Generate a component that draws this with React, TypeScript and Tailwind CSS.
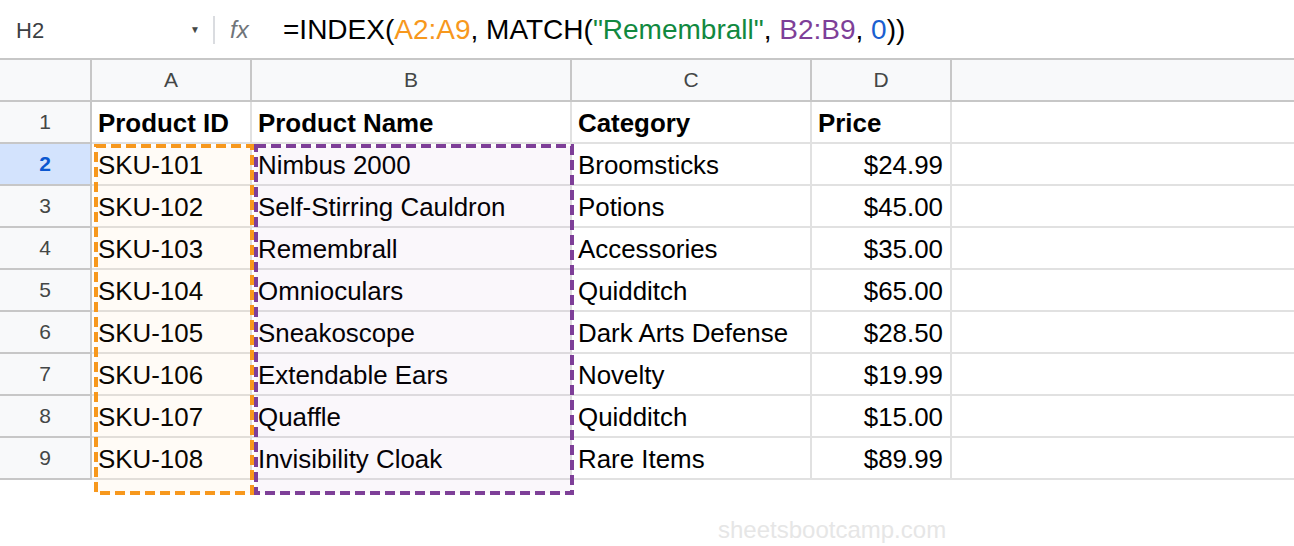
import React from "react";

const rows = [
  ["SKU-101", "Nimbus 2000", "Broomsticks", "$24.99"],
  ["SKU-102", "Self-Stirring Cauldron", "Potions", "$45.00"],
  ["SKU-103", "Remembrall", "Accessories", "$35.00"],
  ["SKU-104", "Omnioculars", "Quidditch", "$65.00"],
  ["SKU-105", "Sneakoscope", "Dark Arts Defense", "$28.50"],
  ["SKU-106", "Extendable Ears", "Novelty", "$19.99"],
  ["SKU-107", "Quaffle", "Quidditch", "$15.00"],
  ["SKU-108", "Invisibility Cloak", "Rare Items", "$89.99"],
];

const font = { fontFamily: '"Liberation Sans", Arial, sans-serif' };

function Row({ n, cells, bold, active }: { n: number; cells: string[]; bold?: boolean; active?: boolean }) {
  return (
    <div className="flex h-[42px]">
      <div
        className={`w-[92px] shrink-0 flex items-center justify-center border-r-2 border-r-[#c7c7c7] border-b-2 border-b-[#c7c7c7] text-[21px] ${
          active ? "bg-[#d3e3fd] text-[#0b57d0] font-bold" : "bg-[#f8f9fa] text-[#444746]"
        }`}
      >
        {n}
      </div>
      <div className={`w-[160px] shrink-0 flex items-center pl-[6px] pt-[2px] border-r-2 border-b-2 border-[#e1e1e1] text-[25.9px] text-black ${bold ? "font-bold" : ""}`}>
        {cells[0]}
      </div>
      <div className={`w-[320px] shrink-0 flex items-center pl-[6px] pt-[2px] border-r-2 border-b-2 border-[#e1e1e1] text-[25.9px] text-black ${bold ? "font-bold" : ""}`}>
        {cells[1]}
      </div>
      <div className={`w-[240px] shrink-0 flex items-center pl-[6px] pt-[2px] border-r-2 border-b-2 border-[#e1e1e1] text-[25.9px] text-black ${bold ? "font-bold" : ""}`}>
        {cells[2]}
      </div>
      <div
        className={`w-[140px] shrink-0 flex items-center pt-[2px] border-r-2 border-b-2 border-[#e1e1e1] text-[25.9px] text-black ${
          bold ? "font-bold justify-start pl-[6px]" : "justify-end pr-[7px]"
        }`}
      >
        {cells[3]}
      </div>
      <div className="flex-1 border-b-2 border-[#e1e1e1]" />
    </div>
  );
}

export default function App() {
  return (
    <div className="relative w-[1294px] h-[546px] bg-white overflow-hidden" style={font}>
      {/* Formula bar */}
      <div className="flex items-center h-[58px] pt-[2px]">
        <div className="w-[213px] shrink-0 flex items-center pl-[16px] pr-[13px]">
          <span className="text-[22px] text-[#3c4043]">H2</span>
          <span className="ml-auto text-[#444746] text-[10px] leading-none">▼</span>
        </div>
        <div className="w-[2px] h-[28px] bg-[#dadce0]" />
        <div className="ml-[15px] w-[38px] text-[24px] italic text-[#70757a]">fx</div>
        <div className="ml-[15px] text-[28px] text-black whitespace-nowrap">
          =INDEX(<span className="text-[#f7981d]">A2:A9</span>, MATCH(
          <span className="text-[#11893f]">"Remembrall"</span>, <span className="text-[#7e3f98]">B2:B9</span>,{" "}
          <span className="text-[#1a5fd0]">0</span>))
        </div>
      </div>

      {/* Column header */}
      <div className="flex h-[44px] border-t-2 border-b-2 border-[#c7c7c7] bg-[#f8f9fa] text-[21px] text-[#444746]">
        <div className="w-[92px] shrink-0 border-r-2 border-[#c7c7c7]" />
        <div className="w-[160px] shrink-0 border-r-2 border-[#c7c7c7] flex items-center justify-center">A</div>
        <div className="w-[320px] shrink-0 border-r-2 border-[#c7c7c7] flex items-center justify-center">B</div>
        <div className="w-[240px] shrink-0 border-r-2 border-[#c7c7c7] flex items-center justify-center">C</div>
        <div className="w-[140px] shrink-0 border-r-2 border-[#c7c7c7] flex items-center justify-center">D</div>
        <div className="flex-1" />
      </div>

      <Row n={1} cells={["Product ID", "Product Name", "Category", "Price"]} bold />
      {rows.map((r, i) => (
        <Row key={i} n={i + 2} cells={r} active={i === 0} />
      ))}

      {/* Range highlights */}
      <svg className="absolute left-0 top-0 pointer-events-none" width="1294" height="546">
        <rect x="96" y="146" width="156" height="347" fill="rgba(246,146,30,0.04)" stroke="#f7981d" strokeWidth="4" strokeDasharray="10 5" />
        <rect x="256" y="146" width="316" height="347" fill="rgba(123,63,154,0.04)" stroke="#7e3f98" strokeWidth="4" strokeDasharray="10 5" />
      </svg>

      <div className="absolute left-[718px] top-[512px] text-[24px] text-[#e6e6e6] whitespace-nowrap">sheetsbootcamp.com</div>
    </div>
  );
}
